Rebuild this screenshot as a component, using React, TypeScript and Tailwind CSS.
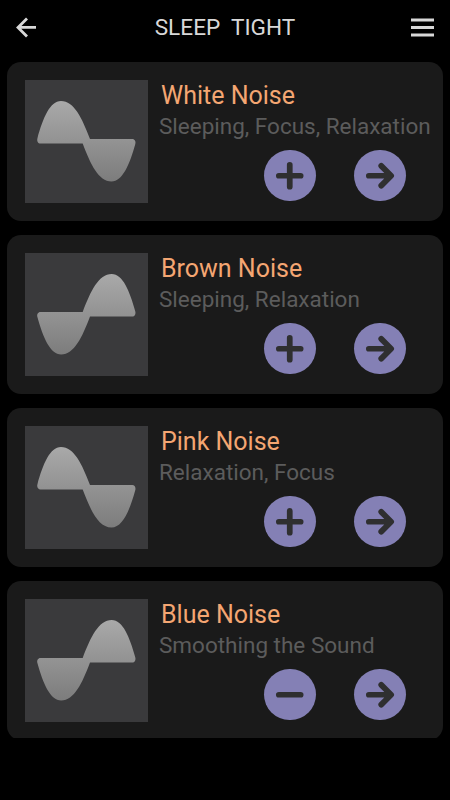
import { useState } from "react";

interface Sound {
  name: string;
  tags: string;
  flipped: boolean;
  added: boolean;
}

const SOUNDS: Sound[] = [
  { name: "White Noise", tags: "Sleeping, Focus, Relaxation", flipped: false, added: false },
  { name: "Brown Noise", tags: "Sleeping, Relaxation", flipped: true, added: false },
  { name: "Pink Noise", tags: "Relaxation, Focus", flipped: false, added: false },
  { name: "Blue Noise", tags: "Smoothing the Sound", flipped: true, added: true },
];

function WaveTile({ id, flipped }: { id: string; flipped: boolean }) {
  return (
    <svg viewBox="0 0 123 123" className="block size-[123px] shrink-0 bg-[#3a3a3c]">
      <defs>
        <linearGradient id={id} gradientUnits="userSpaceOnUse" x1="0" y1="21" x2="0" y2="102">
          <stop offset="0" stopColor="#a9a9a9" />
          <stop offset="1" stopColor="#7c7c7c" />
        </linearGradient>
      </defs>
      <path
        transform={flipped ? "translate(122.7 0) scale(-1 1)" : undefined}
        fill={`url(#${id})`}
        d="M12.4 58.5C18 38 25 21.1 36 21.1C49 21.1 57 38 65 59.1H107.2C109.7 59.1 111 61.6 110.3 64C104.7 84.5 97.5 101.5 86.5 101.5C73.5 101.5 65.7 84.7 57.7 63.6H15.5C13 63.6 11.7 61 12.4 58.5Z"
      />
    </svg>
  );
}

function RoundButton({ label, d, onClick }: { label: string; d: string; onClick?: () => void }) {
  return (
    <button aria-label={label} onClick={onClick} className="size-[51.5px] rounded-full bg-[#8480b5]">
      <svg
        viewBox="0 0 52 52"
        className="size-full"
        fill="none"
        stroke="#2f2f30"
        strokeWidth="5.8"
        strokeLinecap="round"
        strokeLinejoin="round"
      >
        <path d={d} />
      </svg>
    </button>
  );
}

function SoundCard({ sound, id }: { sound: Sound; id: string }) {
  const [added, setAdded] = useState(sound.added);

  return (
    <li className="flex h-[159px] shrink-0 rounded-[14px] bg-[#1a1a1a] pt-[18px] pl-[18px]">
      <WaveTile id={id} flipped={sound.flipped} />
      <div className="flex flex-col pt-px whitespace-nowrap">
        <h2 className="ml-[13px] text-[25px] leading-[30px] text-[#f4a672]">{sound.name}</h2>
        <p className="ml-[11px] text-[22.5px] leading-[30px] text-[#5c5c5c]">{sound.tags}</p>
        <div className="mt-[8.7px] ml-[116px] flex gap-[38.5px]">
          <RoundButton
            label={added ? "Remove" : "Add"}
            d={added ? "M15 26H37" : "M15 26H37M26 15V37"}
            onClick={() => setAdded(!added)}
          />
          <RoundButton label="Open" d="M15 26H37M27.5 16L37.5 26L27.5 36" />
        </div>
      </div>
    </li>
  );
}

export default function App() {
  return (
    <div className="h-[800px] w-[450px] overflow-hidden bg-black font-['Roboto',sans-serif]">
      <header className="flex h-[62px] items-start justify-between pt-[17px] pr-4 pl-4">
        <button aria-label="Back" className="h-[21px] w-6">
          <svg viewBox="0 0 24 21" className="h-[21px] w-6" fill="none" stroke="#d8d8d8" strokeWidth="2.8">
            <path d="M20 10.4H2M11 1.4L2 10.4L11 19.4" />
          </svg>
        </button>
        <h1 className="-mt-1 text-[22.6px] leading-[30px] whitespace-pre text-[#d8d8d8]">{"SLEEP  TIGHT"}</h1>
        <button aria-label="Menu" className="h-[21px] w-6">
          <svg viewBox="0 0 24 21" className="h-[21px] w-6" fill="#d8d8d8">
            <path d="M1 1.5h23v3H1zM1 9h23v3H1zM1 16.5h23v3H1z" />
          </svg>
        </button>
      </header>
      <ul className="flex h-[675.5px] flex-col gap-[14px] overflow-hidden px-[7px]">
        {SOUNDS.map((sound, i) => (
          <SoundCard key={sound.name} sound={sound} id={`wave-${i}`} />
        ))}
      </ul>
    </div>
  );
}
